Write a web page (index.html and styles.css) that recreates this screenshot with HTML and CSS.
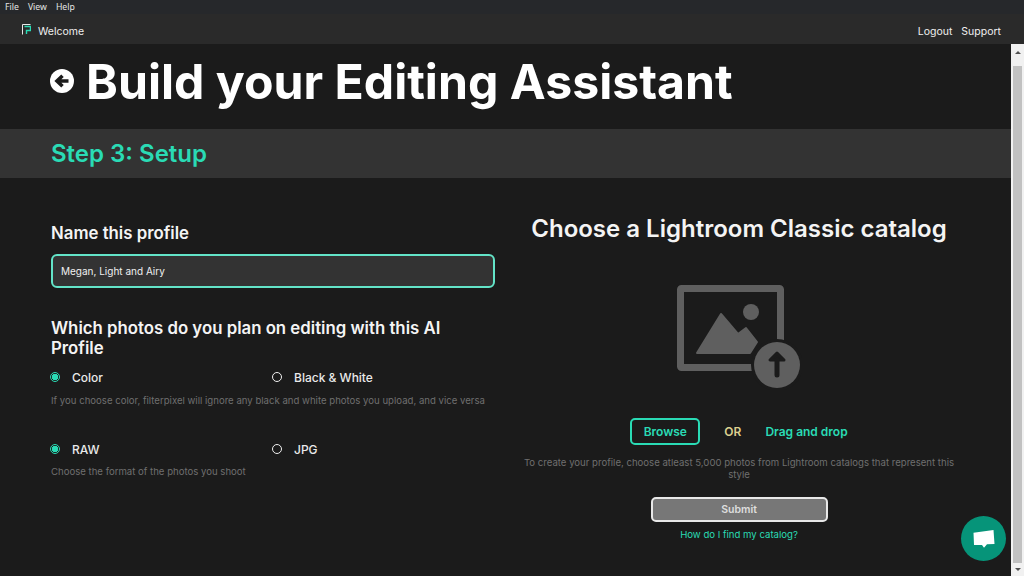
FILE: index.html
```html
<!DOCTYPE html>
<html lang="en">
<head>
    <meta charset="UTF-8">
    <meta name="viewport" content="width=device-width, initial-scale=1.0">
    <title>Build your Editing Assistant</title>
    <link rel="stylesheet" href="styles.css">
</head>
<body>
    <div class="menubar">
        <span>File</span>
        <span>View</span>
        <span>Help</span>
    </div>
    <nav class="navbar">
        <div class="brand">
            <svg class="brand-logo" width="9" height="11" viewBox="0 0 9 11">
                <path d="M0.5 10.5V0.5H8.5" fill="none" stroke="#e8e8e8" stroke-width="1"/>
                <path d="M2.5 2.500H8.500V6.500H4.500V10" fill="none" stroke="#2adbb5" stroke-width="1.4"/>
            </svg>
            <span>Welcome</span>
        </div>
        <div class="nav-links">
            <a>Logout</a>
            <a>Support</a>
        </div>
    </nav>
    <div class="window">
        <main class="content">
            <header class="title-row">
                <svg class="back-icon" width="24" height="24" viewBox="0 0 24 24">
                    <circle cx="12" cy="12" r="12" fill="#fff"/>
                    <path d="M18.500 12H8M12.500 6.800L7 12l5.500 5.200" fill="none" stroke="#1b1b1b" stroke-width="3.6"/>
                </svg>
                <h1>Build your Editing Assistant</h1>
            </header>
            <div class="step-band">
                <h2>Step 3: Setup</h2>
            </div>
            <div class="columns">
                <section class="col-left">
                    <h3 class="field-title">Name this profile</h3>
                    <input class="name-input" type="text" value="Megan, Light and Airy">
                    <h3 class="question">Which photos do you plan on editing with this AI Profile</h3>
                    <div class="radio-row">
                        <label class="radio"><span class="dot checked"></span>Color</label>
                        <label class="radio"><span class="dot"></span>Black &amp; White</label>
                    </div>
                    <p class="hint hint-color">If you choose color, filterpixel will ignore any black and white photos you upload, and vice versa</p>
                    <div class="radio-row">
                        <label class="radio"><span class="dot checked"></span>RAW</label>
                        <label class="radio"><span class="dot"></span>JPG</label>
                    </div>
                    <p class="hint">Choose the format of the photos you shoot</p>
                </section>
                <section class="col-right">
                    <h3 class="catalog-title">Choose a Lightroom Classic catalog</h3>
                    <svg class="upload-icon" width="126" height="106" viewBox="0 0 126 106">
                        <rect x="4.500" y="4.500" width="100" height="79" rx="1" fill="none" stroke="#5f5f5f" stroke-width="7"/>
                        <circle cx="75" cy="28" r="8" fill="#5f5f5f"/>
                        <path d="M45 30L21 69h53l7-11-11-14-8 6z" fill="#5f5f5f" stroke="#5f5f5f" stroke-width="2" stroke-linejoin="round"/>
                        <circle cx="101" cy="81" r="26" fill="#1b1b1b"/>
                        <circle cx="101" cy="81" r="23" fill="#5f5f5f"/>
                        <path d="M101 69l-7 7h14z" fill="#1b1b1b" stroke="#1b1b1b" stroke-width="3" stroke-linejoin="round"/>
                        <path d="M101 76V91" fill="none" stroke="#1b1b1b" stroke-width="5" stroke-linecap="round"/>
                    </svg>
                    <div class="upload-row">
                        <button class="browse-btn">Browse</button>
                        <span class="or">OR</span>
                        <span class="drag">Drag and drop</span>
                    </div>
                    <p class="hint catalog-hint">To create your profile, choose atleast 5,000 photos from Lightroom catalogs that represent this style</p>
                    <button class="submit-btn">Submit</button>
                    <a class="find-link">How do I find my catalog?</a>
                </section>
            </div>
        </main>
        <div class="scrollbar">
            <span class="arrow-up"></span>
            <div class="scroll-track"><div class="scroll-thumb"></div></div>
            <span class="arrow-down"></span>
        </div>
    </div>
    <div class="chat-bubble">
        <svg width="22" height="18" viewBox="0 0 22 18">
            <path d="M0.500 2.700L20.500 0l1 14-7.500 .3-3 3.400-2-2.700-8 0z" fill="#fff"/>
        </svg>
    </div>
</body>
</html>
```

FILE: styles.css
```css
* {
    box-sizing: border-box;
}
html, body {
    height: 100%;
}
body {
    margin: 0;
    display: flex;
    flex-direction: column;
    overflow: hidden;
    font-family: Inter, "Noto Sans", sans-serif;
    background-color: #1b1b1b;
    color: #fff;
}
h1, h2, h3, p {
    margin: 0;
}
.menubar {
    display: flex;
    gap: 9px;
    height: 14px;
    padding-left: 5px;
    background-color: #26282b;
    color: #e4e4e4;
    font-family: "Noto Sans", sans-serif;
    font-size: 8.7px;
    line-height: 15px;
}
.navbar {
    display: flex;
    justify-content: space-between;
    align-items: center;
    height: 30px;
    padding: 4px 23px 0 22px;
    background-color: #2a2a2a;
    font-size: 10.5px;
    color: #efefef;
}
.brand {
    display: flex;
    align-items: center;
    gap: 7px;
}
.brand-logo {
    margin-top: -4px;
}
.nav-links {
    display: flex;
    gap: 9px;
}
.window {
    flex: 1;
    display: flex;
    min-height: 0;
}
.content {
    flex: 1;
    min-width: 0;
}
.title-row {
    display: flex;
    align-items: center;
    gap: 12px;
    height: 85px;
    padding: 0 0 9px 50px;
}
.back-icon {
    margin-top: -2px;
}
h1 {
    font-size: 48.2px;
    font-weight: 700;
    line-height: 76px;
    color: #fff;
}
.step-band {
    height: 49px;
    padding: 1px 0 0 51px;
    background-color: #333;
}
h2 {
    font-size: 24px;
    font-weight: 600;
    line-height: 48px;
    color: #2adbb5;
}
.columns {
    display: grid;
    grid-template-columns: 444px 420px;
    column-gap: 34px;
    padding: 38px 0 0 51px;
}
.field-title {
    font-size: 16.8px;
    font-weight: 600;
    line-height: 34px;
    color: #f4f4f4;
}
.name-input {
    display: block;
    width: 444px;
    height: 34px;
    margin-top: 4px;
    padding: 0 8px;
    border: 2px solid #63e4c8;
    border-radius: 6px;
    outline: none;
    background-color: #333;
    color: #f0f0f0;
    font-family: Inter, sans-serif;
    font-size: 10px;
}
.question {
    max-width: 420px;
    margin-top: 30px;
    font-size: 16.8px;
    font-weight: 600;
    line-height: 20px;
    color: #f4f4f4;
}
.radio-row {
    display: grid;
    grid-template-columns: 222px 1fr;
    margin: 10px 0 0 -1px;
}
.radio {
    display: flex;
    align-items: center;
    gap: 12px;
    height: 18px;
    font-size: 12px;
    font-weight: 500;
    color: #eaeaea;
}
.dot {
    width: 10px;
    height: 10px;
    border: 1px solid #f0f0f0;
    border-radius: 50%;
}
.dot.checked {
    border-color: #2adbb5;
    background: radial-gradient(circle, #2adbb5 0 3px, #1b1b1b 3.5px);
}
.hint {
    font-size: 9.6px;
    line-height: 13px;
    color: #6f6f6f;
}
.hint-color {
    margin-bottom: 33px;
}
.radio-row + .hint {
    margin-top: 7px;
}
.radio-row + .hint-color {
    margin-top: 8px;
}
.col-right {
    display: flex;
    flex-direction: column;
    align-items: center;
}
.catalog-title {
    margin-top: -2px;
    font-size: 24px;
    font-weight: 600;
    line-height: 30px;
    color: #f4f4f4;
}
.upload-icon {
    margin-top: 40px;
}
.upload-row {
    display: flex;
    align-items: center;
    gap: 24px;
    margin-top: 28px;
    font-size: 12px;
    font-weight: 600;
}
.browse-btn {
    width: 70px;
    height: 27px;
    border: 2px solid #2adbb5;
    border-radius: 5px;
    background: none;
    color: #2adbb5;
    font: inherit;
}
.or {
    color: #dcd08f;
}
.drag {
    color: #2adbb5;
}
.catalog-hint {
    width: 440px;
    margin-top: 12px;
    line-height: 12px;
    text-align: center;
}
.submit-btn {
    width: 177px;
    height: 25px;
    margin-top: 16px;
    border: 2px solid #e8e8e8;
    border-radius: 5px;
    background-color: #777;
    color: #ddd;
    font-family: Inter, sans-serif;
    font-size: 10.5px;
    font-weight: 600;
}
.find-link {
    margin-top: 6px;
    font-size: 9.6px;
    line-height: 13px;
    color: #2adbb5;
}
.scrollbar {
    display: flex;
    flex-direction: column;
    align-items: center;
    width: 13px;
    padding-top: 7px;
    background-color: #f1f1f1;
}
.scroll-track {
    flex: 1;
    width: 100%;
    padding: 12px 2px 5px;
}
.scroll-thumb {
    height: 100%;
    background-color: #c1c1c1;
}
.arrow-up, .arrow-down {
    width: 0;
    height: 0;
    border-left: 3px solid transparent;
    border-right: 3px solid transparent;
}
.arrow-up {
    border-bottom: 3px solid #505050;
}
.arrow-down {
    margin-bottom: 5px;
    border-top: 3px solid #505050;
}
.chat-bubble {
    position: absolute;
    left: 961px;
    top: 516px;
    display: flex;
    align-items: center;
    justify-content: center;
    width: 45px;
    height: 45px;
    border-radius: 50%;
    background-color: #069479;
}
```
